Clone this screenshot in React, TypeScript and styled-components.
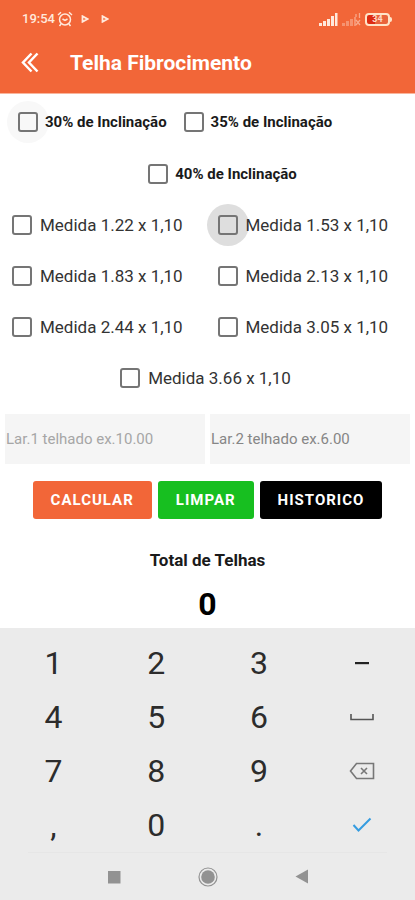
import React from "react";
import styled, { createGlobalStyle } from "styled-components";

const GlobalStyle = createGlobalStyle`
  *, *::before, *::after { box-sizing: border-box; }
  body {
    margin: 0;
    background: #fff;
    color: #1c1c1c;
    font-family: Roboto, "Liberation Sans", sans-serif;
  }
  button, input { font-family: inherit; }
`;

const Screen = styled.div`
  display: flex;
  flex-direction: column;
  min-height: 100vh;
`;

const Header = styled.header`
  background: #f26638;
  color: #fff;
  border-bottom: 1px solid #f9b59c;
`;

const StatusBar = styled.div`
  display: flex;
  align-items: center;
  justify-content: space-between;
  height: 38px;
  padding: 0 23px 0 22px;
  color: #ffe9dc;
`;

const StatusGroup = styled.div<{ $gap: number }>`
  display: flex;
  align-items: center;
  gap: ${(p) => p.$gap}px;
`;

const Clock = styled.span`
  font-size: 13px;
  font-weight: 500;
  line-height: 16px;
`;

const Notices = styled.div`
  display: flex;
  gap: 12px;
  padding-left: 6px;
`;

const AppBar = styled.div`
  display: flex;
  align-items: center;
  gap: 30px;
  height: 55px;
  padding: 0 20px 6px;
`;

const IconButton = styled.button`
  display: flex;
  padding: 0;
  border: 0;
  background: none;
  color: inherit;
`;

const Title = styled.h1`
  margin: 0;
  font-size: 21px;
  font-weight: 700;
  line-height: 28px;
`;

const Form = styled.form`
  display: flex;
  flex-direction: column;
`;

const SlopeRow = styled.div<{ $centered?: boolean }>`
  display: flex;
  align-items: center;
  justify-content: ${(p) => (p.$centered ? "center" : "flex-start")};
  gap: 17px;
  height: ${(p) => (p.$centered ? 50 : 55)}px;
  padding-left: ${(p) => (p.$centered ? 30 : 18)}px;
`;

const SizeGrid = styled.div`
  display: grid;
  grid-template-columns: 1fr 1fr;
  grid-auto-rows: 51px;
  align-items: center;
  padding-right: 4px;
`;

const SizeCell = styled.div<{ $wide?: boolean }>`
  display: flex;
  grid-column: ${(p) => (p.$wide ? "1 / -1" : "auto")};
  justify-content: ${(p) => (p.$wide ? "center" : "flex-start")};
  padding-left: ${(p) => (p.$wide ? 0 : 12)}px;
`;

const CheckLabel = styled.label<{ $bold?: boolean }>`
  display: flex;
  align-items: center;
  gap: ${(p) => (p.$bold ? 7 : 8)}px;
  color: ${(p) => (p.$bold ? "#1a1a1a" : "#333")};
  font-size: ${(p) => (p.$bold ? 15 : 17)}px;
  font-weight: ${(p) => (p.$bold ? 700 : 400)};
  line-height: 20px;
  white-space: nowrap;
`;

const CheckBox = styled.input<{ $halo?: string }>`
  appearance: none;
  flex: none;
  width: 20px;
  height: 20px;
  margin: 0;
  border: 2px solid #757575;
  border-radius: 3px;
  background: ${(p) => p.$halo ?? "#fff"};
  &:checked { background: #f26638; }
`;

const Halo = styled.span<{ $color: string }>`
  display: flex;
  align-items: center;
  justify-content: center;
  width: 42px;
  height: 42px;
  margin: -11px;
  border-radius: 50%;
  background: ${(p) => p.$color};
`;

const Fields = styled.div`
  display: grid;
  grid-template-columns: 1fr 1fr;
  gap: 5px;
  padding: 11px 5px 0;
`;

const Field = styled.input<{ $hint: string }>`
  width: 100%;
  height: 50px;
  padding: 0 1px;
  border: 0;
  border-radius: 0;
  background: #f5f5f5;
  color: #333;
  font-size: 15px;
  &::placeholder { color: ${(p) => p.$hint}; opacity: 1; }
`;

const Actions = styled.div`
  display: flex;
  justify-content: center;
  gap: 6px;
  padding-top: 17px;
`;

const ActionButton = styled.button<{ $color: string }>`
  height: 38px;
  padding: 0 18px;
  border: 0;
  border-radius: 3px;
  background: ${(p) => p.$color};
  color: #fff;
  font-size: 15px;
  font-weight: 700;
  letter-spacing: 1px;
`;

const Result = styled.section`
  display: flex;
  flex-direction: column;
  align-items: center;
  gap: 14px;
  padding: 29px 0 6px;
`;

const ResultTitle = styled.h2`
  margin: 0;
  color: #1a1a1a;
  font-size: 17px;
  font-weight: 700;
  line-height: 24px;
`;

const ResultValue = styled.output`
  color: #000;
  font-size: 32px;
  font-weight: 700;
  line-height: 36px;
`;

const Keyboard = styled.div`
  margin-top: auto;
  background: #ebebeb;
`;

const Keys = styled.div`
  display: grid;
  grid-template-columns: repeat(4, 1fr);
  grid-auto-rows: 54px;
  padding: 8px 2px 0;
`;

const Key = styled.button`
  display: flex;
  align-items: center;
  justify-content: center;
  padding: 0;
  border: 0;
  background: none;
  color: #2c2c2c;
  font-size: 32px;
  font-weight: 400;
  line-height: 40px;
`;

const NavBar = styled.nav`
  display: flex;
  align-items: center;
  justify-content: center;
  gap: 77px;
  height: 48px;
  margin: 0 28px;
  border-top: 1px solid #e6e6e6;
  color: #929292;
`;

const BackIcon = () => (
  <svg width="20" height="22" viewBox="0 0 20 22" fill="none" stroke="#fff" strokeWidth="2.500">
    <path d="M11.500 1.500 3 10.500l8.500 9M17.500 1.500 9 10.500l8.500 9" />
  </svg>
);

const AlarmIcon = () => (
  <svg width="16" height="16" viewBox="0 0 16 16" fill="none" stroke="currentColor" strokeWidth="1.500">
    <circle cx="8" cy="8.500" r="5.500" />
    <path d="M1 4 4 1.300M15 4l-3-2.700M5.500 8 8 9.500 10.500 8M4 13l-1.500 2M12 13l1.500 2" />
  </svg>
);

const PlayIcon = () => (
  <svg width="8" height="8" viewBox="0 0 8 8" fill="none" stroke="currentColor" strokeWidth="1.800">
    <path d="M1.500 1.200v5.600L6.500 4z" />
  </svg>
);

const SignalIcon = () => (
  <svg width="19" height="13" viewBox="0 0 19 13" fill="currentColor">
    <path d="M0 10h3v3H0zM4 8h3v5H4zM8 6h3v7H8zM12 3h3v10h-3zM16 0h2.500v13H16z" />
  </svg>
);

const NoSignalIcon = () => (
  <svg width="19" height="13" viewBox="0 0 19 13" fill="currentColor">
    <path opacity=".35" d="M0 10h3v3H0zM4 8h3v5H4zM8 6h3v7H8zM12 4h2v9h-2z" />
    <path opacity=".5" fill="none" stroke="currentColor" strokeWidth="1.300" d="m14 7 4 5M18 7l-4 5M14 1v3M17.500 0v5" />
  </svg>
);

const Battery = styled.span`
  display: flex;
  align-items: center;
  &::after {
    content: "";
    width: 2px;
    height: 5px;
    border-radius: 0 2px 2px 0;
    background: #ffe4c8;
  }
`;

const BatteryCell = styled.span`
  width: 25px;
  height: 13px;
  border: 2px solid #ffe4c8;
  border-radius: 4px;
  background: linear-gradient(90deg, #dd2c12 0 40%, #e9643c 40%);
  color: #ffd9c4;
  font-size: 9px;
  font-weight: 700;
  line-height: 9px;
  text-align: center;
`;

const SpaceIcon = () => (
  <svg width="24" height="8" viewBox="0 0 24 8" fill="none" stroke="#555" strokeWidth="1.600">
    <path d="M1 1v5.500h22V1" />
  </svg>
);

const EraseIcon = () => (
  <svg width="26" height="18" viewBox="0 0 26 18" fill="none" stroke="#777" strokeWidth="1.600">
    <path d="M7.500 1.500h17v15h-17L1.500 9zM12 6l6 6M18 6l-6 6" />
  </svg>
);

const DoneIcon = () => (
  <svg width="20" height="16" viewBox="0 0 20 16" fill="none" stroke="#359ce0" strokeWidth="2">
    <path d="m1.500 8 5 5.500L18.500 1.500" />
  </svg>
);

const MinusIcon = () => (
  <svg width="14" height="4" viewBox="0 0 14 4" fill="#222">
    <path d="M0 1h14v2.200H0z" />
  </svg>
);

type CheckProps = { text: string; bold?: boolean; halo?: string };

const Check = ({ text, bold, halo }: CheckProps) => (
  <CheckLabel $bold={bold}>
    {halo ? (
      <Halo $color={halo}>
        <CheckBox type="checkbox" $halo={halo} />
      </Halo>
    ) : (
      <CheckBox type="checkbox" />
    )}
    {text}
  </CheckLabel>
);

const sizes = ["1.22", "1.53", "1.83", "2.13", "2.44", "3.05", "3.66"];

const keys: { name: string; icon?: React.ReactNode }[] = [
  { name: "1" },
  { name: "2" },
  { name: "3" },
  { name: "Menos", icon: <MinusIcon /> },
  { name: "4" },
  { name: "5" },
  { name: "6" },
  { name: "Espaço", icon: <SpaceIcon /> },
  { name: "7" },
  { name: "8" },
  { name: "9" },
  { name: "Apagar", icon: <EraseIcon /> },
  { name: "," },
  { name: "0" },
  { name: "." },
  { name: "Concluir", icon: <DoneIcon /> },
];

export default function App() {
  return (
    <>
      <GlobalStyle />
      <Screen>
        <Header>
          <StatusBar>
            <StatusGroup $gap={2}>
              <Clock>19:54</Clock>
              <AlarmIcon />
              <Notices>
                <PlayIcon />
                <PlayIcon />
              </Notices>
            </StatusGroup>
            <StatusGroup $gap={4}>
              <SignalIcon />
              <NoSignalIcon />
              <Battery>
                <BatteryCell>34</BatteryCell>
              </Battery>
            </StatusGroup>
          </StatusBar>
          <AppBar>
            <IconButton type="button" aria-label="Voltar">
              <BackIcon />
            </IconButton>
            <Title>Telha Fibrocimento</Title>
          </AppBar>
        </Header>

        <Form onSubmit={(e) => e.preventDefault()}>
          <SlopeRow>
            <Check bold text="30% de Inclinação" halo="#f8f8f8" />
            <Check bold text="35% de Inclinação" />
          </SlopeRow>
          <SlopeRow $centered>
            <Check bold text="40% de Inclinação" />
          </SlopeRow>
          <SizeGrid>
            {sizes.map((size, i) => (
              <SizeCell key={size} $wide={i === sizes.length - 1}>
                <Check text={`Medida ${size} x 1,10`} halo={size === "1.53" ? "#dedede" : undefined} />
              </SizeCell>
            ))}
          </SizeGrid>
          <Fields>
            <Field $hint="#a6a6a6" aria-label="Largura 1 do telhado" placeholder="Lar.1 telhado ex.10.00" />
            <Field $hint="#868686" aria-label="Largura 2 do telhado" placeholder="Lar.2 telhado ex.6.00" />
          </Fields>
          <Actions>
            <ActionButton type="submit" $color="#f26638">CALCULAR</ActionButton>
            <ActionButton type="reset" $color="#17bf20">LIMPAR</ActionButton>
            <ActionButton type="button" $color="#000">HISTORICO</ActionButton>
          </Actions>
        </Form>

        <Result>
          <ResultTitle>Total de Telhas</ResultTitle>
          <ResultValue>0</ResultValue>
        </Result>

        <Keyboard>
          <Keys>
            {keys.map(({ name, icon }) => (
              <Key key={name} type="button" aria-label={name}>
                {icon ?? name}
              </Key>
            ))}
          </Keys>
          <NavBar>
            <IconButton type="button" aria-label="Recentes">
              <svg width="14" height="14" viewBox="0 0 14 14" fill="currentColor">
                <path d="M1 1h12.500v12.500H1z" />
              </svg>
            </IconButton>
            <IconButton type="button" aria-label="Início">
              <svg width="20" height="20" viewBox="0 0 20 20" fill="currentColor">
                <circle cx="10" cy="10" r="6.800" />
                <circle cx="10" cy="10" r="9" fill="none" stroke="currentColor" strokeWidth="1.200" />
              </svg>
            </IconButton>
            <IconButton type="button" aria-label="Retornar">
              <svg width="14" height="15" viewBox="0 0 14 15" fill="currentColor">
                <path d="M13 .500v14L.500 7.500z" />
              </svg>
            </IconButton>
          </NavBar>
        </Keyboard>
      </Screen>
    </>
  );
}
